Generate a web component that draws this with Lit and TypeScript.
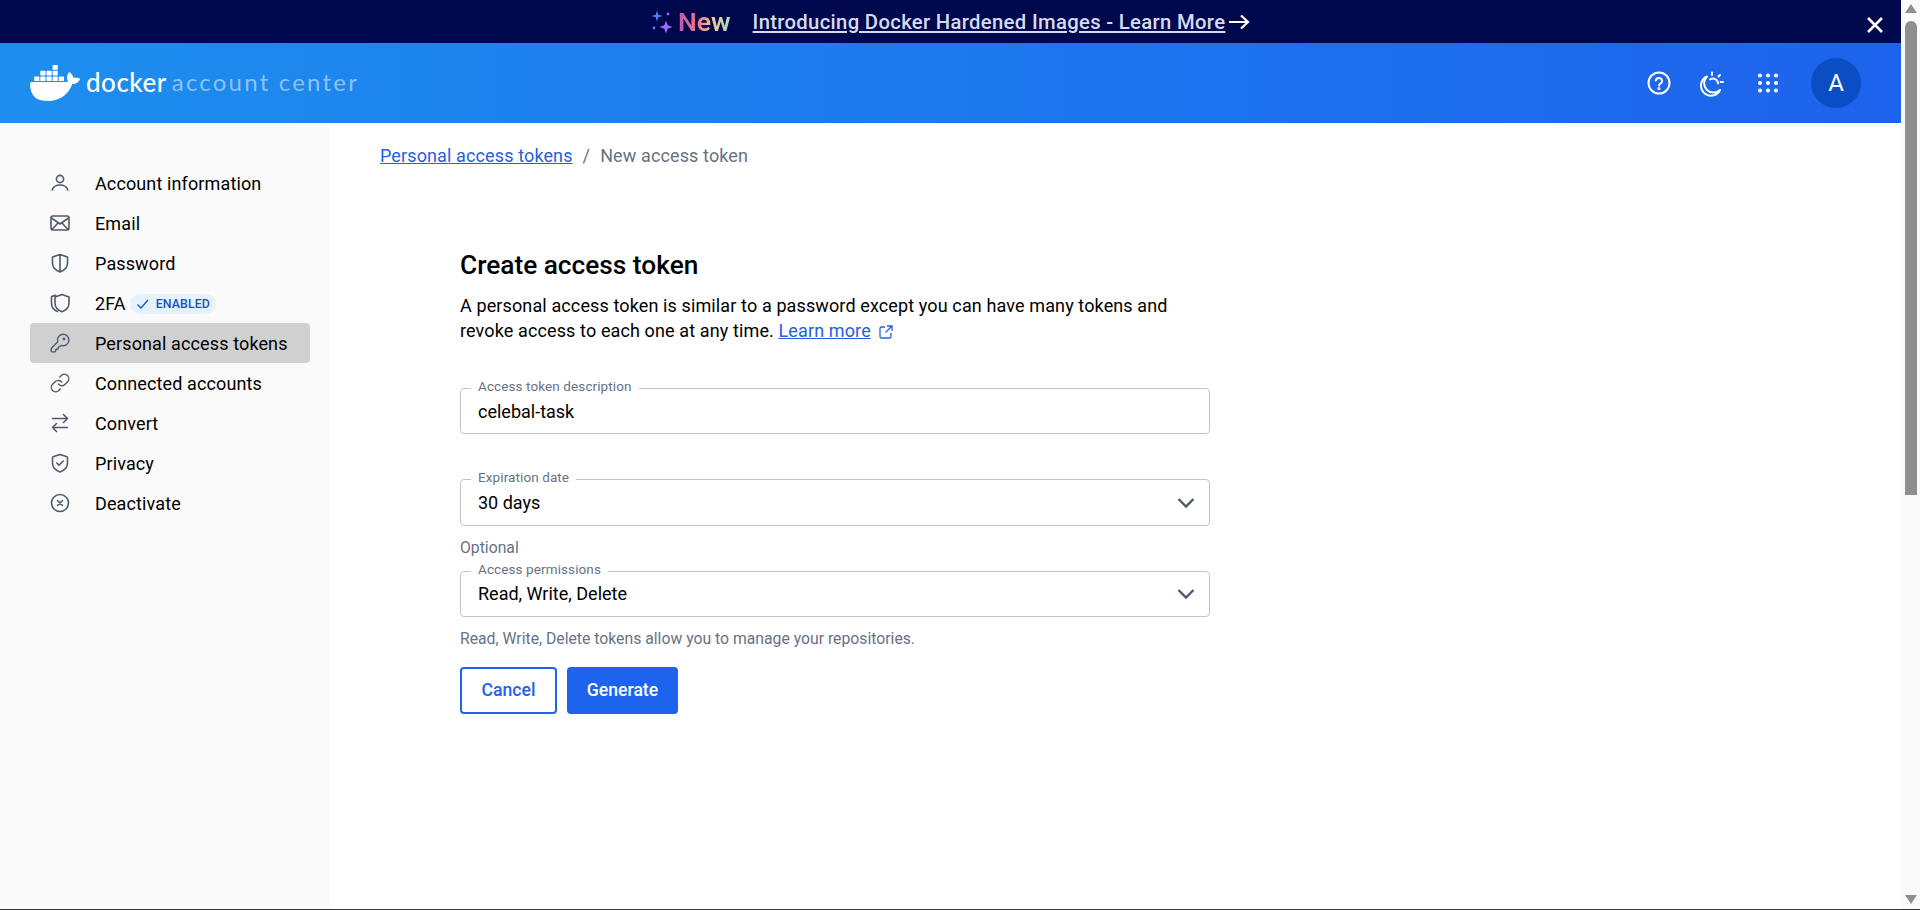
import { LitElement, html, css, svg } from "lit";
import { customElement } from "lit/decorators.js";

const WHALE = "M13.983 11.078h2.119a.186.186 0 00.186-.185V9.006a.186.186 0 00-.186-.186h-2.119a.185.185 0 00-.185.185v1.888c0 .102.083.185.185.185m-2.954-5.43h2.118a.186.186 0 00.186-.186V3.574a.186.186 0 00-.186-.185h-2.118a.185.185 0 00-.185.185v1.888c0 .102.082.185.185.186m0 2.716h2.118a.187.187 0 00.186-.186V6.29a.186.186 0 00-.186-.185h-2.118a.185.185 0 00-.185.185v1.887c0 .102.082.185.185.186m-2.93 0h2.12a.186.186 0 00.184-.186V6.29a.185.185 0 00-.185-.185H8.1a.185.185 0 00-.185.185v1.887c0 .102.083.185.185.186m-2.964 0h2.119a.186.186 0 00.185-.186V6.29a.185.185 0 00-.185-.185H5.136a.186.186 0 00-.186.185v1.887c0 .102.084.185.186.186m5.893 2.715h2.118a.186.186 0 00.186-.185V9.006a.186.186 0 00-.186-.186h-2.118a.185.185 0 00-.185.185v1.888c0 .102.082.185.185.185m-2.93 0h2.12a.185.185 0 00.184-.185V9.006a.185.185 0 00-.184-.186h-2.12a.185.185 0 00-.184.185v1.888c0 .102.083.185.185.185m-2.964 0h2.119a.185.185 0 00.185-.185V9.006a.185.185 0 00-.184-.186h-2.12a.186.186 0 00-.186.186v1.887c0 .102.084.185.186.185m-2.92 0h2.12a.185.185 0 00.184-.185V9.006a.185.185 0 00-.184-.186h-2.12a.185.185 0 00-.185.185v1.888c0 .102.083.185.185.185M23.763 9.89c-.065-.051-.672-.51-1.954-.51-.338.001-.676.03-1.01.087-.248-1.7-1.653-2.53-1.716-2.566l-.344-.199-.226.327c-.284.438-.49.922-.612 1.43-.23.97-.09 1.882.403 2.661-.595.332-1.55.413-1.744.42H.751a.751.751 0 00-.75.748 11.376 11.376 0 00.692 4.062c.545 1.428 1.355 2.48 2.41 3.124 1.18.723 3.1 1.137 5.275 1.137.983.003 1.963-.086 2.93-.266a12.248 12.248 0 003.823-1.389c.98-.567 1.86-1.288 2.61-2.136 1.252-1.418 1.998-2.997 2.553-4.4h.221c1.372 0 2.215-.549 2.68-1.009.309-.293.55-.65.707-1.046l.098-.288Z";

const icon = (body: unknown) => html`<svg class="ic" viewBox="0 0 24 24" fill="none" stroke="currentColor" stroke-width="1.6" stroke-linecap="round" stroke-linejoin="round">${body}</svg>`;

const NAV = [
  { label: "Account information", icon: svg`<circle cx="12" cy="8" r="3.6"/><path d="M4.2 19c1-3 4-5 7.8-5s6.8 2 7.8 5"/>` },
  { label: "Email", icon: svg`<rect x="3" y="5" width="18" height="14" rx="2"/><path d="M3.5 7l8.500 6 8.500-6M4 18.500l6-6.500M20 18.500l-6-6.500"/>` },
  { label: "Password", icon: svg`<path d="M12 3.500l7.500 2.500v6c0 4.500-3.300 7.400-7.500 9-4.200-1.600-7.500-4.500-7.500-9V6zM12 3.500V21"/>` },
  { label: "2FA", chip: true, icon: svg`<path d="M14 3.500l7 2.500v6c0 4.500-3 7.200-7 8.700-4-1.500-7-4.200-7-8.700V6zM7.500 4.200L3.500 5.500v6.500c0 4 2.500 7 6 8.500"/>` },
  { label: "Personal access tokens", active: true, icon: svg`<path transform="translate(1.500 1.500) scale(.88)" d="M2.586 17.414A2 2 0 0 0 2 18.828V21a1 1 0 0 0 1 1h3a1 1 0 0 0 1-1v-1a1 1 0 0 1 1-1h1a1 1 0 0 0 1-1v-1a1 1 0 0 1 1-1h.172a2 2 0 0 0 1.414-.586l.814-.814a6.500 6.500 0 1 0-4-4z"/><circle cx="16" cy="8" r=".6"/>` },
  { label: "Connected accounts", icon: svg`<path transform="translate(1.500 1.500) scale(.88)" d="M10 13a5 5 0 0 0 7.540.540l3-3a5 5 0 0 0-7.070-7.070l-1.720 1.710M14 11a5 5 0 0 0-7.540-.540l-3 3a5 5 0 0 0 7.070 7.070l1.710-1.710"/>` },
  { label: "Convert", icon: svg`<path d="M4.500 7.500H19.500M15.500 3.500l4 4-4 4M19.500 16.500H4.500M8.500 12.500l-4 4 4 4"/>` },
  { label: "Privacy", icon: svg`<path d="M12 3.500l6.300 2a1.500 1.500 0 0 1 1.200 1.500v5c0 4.500-3.300 7.400-7.500 9-4.200-1.600-7.500-4.500-7.500-9V7a1.500 1.500 0 0 1 1.200-1.500zM8.800 12l2.200 2.200 4.200-4.200"/>` },
  { label: "Deactivate", icon: svg`<circle cx="12" cy="12" r="8.500"/><path d="M9.500 9.500l5 5M14.500 9.500l-5 5"/>` },
];

const chevron = html`<svg class="chev" viewBox="0 0 18 12" fill="none" stroke="currentColor" stroke-width="2.400"><path d="M1.500 2l7.500 7.500L16.500 2"/></svg>`;

@customElement("app-root")
export class AppRoot extends LitElement {
  static styles = css`
    :host { display: block; height: 100vh; overflow: hidden; font-family: Roboto, "Noto Sans", sans-serif; color: #000; background: #fff; }
    * { box-sizing: border-box; }
    .page { display: flex; height: 910px; border-bottom: 1px solid #333; }
    .content { flex: 1; min-width: 0; display: flex; flex-direction: column; }
    .scroll { width: 19px; background: #fafafa; display: flex; flex-direction: column; align-items: center; padding: 4px 0 5px 1px; }
    .tri { width: 0; height: 0; border-left: 6px solid transparent; border-right: 6px solid transparent; }
    .tri.up { border-bottom: 9px solid #8f8f8f; }
    .tri.down { border-top: 9px solid #8f8f8f; margin-top: auto; }
    .thumb { width: 12px; height: 474px; margin-top: 8px; background: #8f8f8f; border-radius: 6px 6px 0 0; }

    .banner { height: 43px; background: #00084d; display: flex; align-items: center; padding: 0 17px 0 650px; color: #fff; }
    .spark { width: 24px; height: 24px; margin-right: 4px; }
    .new { font-size: 26.5px; line-height: 32px; font-weight: 600; background: linear-gradient(90deg, #b85aa8 0%, #f0708a 35%, #f6c79a 65%, #a8dcc0 100%); -webkit-background-clip: text; background-clip: text; color: transparent; margin-right: 22px; }
    .promo { font-size: 20.25px; font-weight: 500; color: #d6dbee; text-decoration: underline; letter-spacing: .33px; }
    .arrow { width: 22px; height: 16px; margin-left: 3px; }
    .close { margin: 7px 0 0 auto; width: 18px; height: 18px; }

    .header { height: 80px; background: linear-gradient(90deg, #1d8eee 0%, #1d63ed 100%); display: flex; align-items: center; padding: 0 40px 0 30px; color: #fff; }
    .whale { width: 50px; height: 50px; fill: #fff; margin-right: 6px; }
    .brand { font-family: Lato, sans-serif; font-size: 26px; line-height: 30px; font-weight: 500; letter-spacing: .5px; margin-bottom: 2px; }
    .sub { font-family: Lato, sans-serif; font-size: 24px; line-height: 30px; font-weight: 400; letter-spacing: 2.2px; color: #8cc2f8; margin: 0 0 2px 5px; }
    .tools { margin-left: auto; display: flex; align-items: center; }
    .tool { width: 28px; height: 28px; display: block; }
    .t1 { margin-right: 23px; }
    .t2 { margin-right: 30px; }
    .t3 { margin-right: 29px; }
    .avatar { width: 50px; height: 50px; border-radius: 50%; background: #0b4dc4; display: flex; align-items: center; justify-content: center; font-size: 24px; color: #fff; }

    .body { flex: 1; display: flex; min-height: 0; }
    .side { width: 330px; background: #fafafa; padding: 40px 20px 0 30px; }
    .item { height: 40px; display: flex; align-items: center; padding-left: 18px; border-radius: 4px; font-size: 18px; letter-spacing: .12px; }
    .item.active { background: #d0d0d0; }
    .ic { width: 24px; height: 24px; color: #505a6d; flex: none; margin-right: 23px; }
    .chip { display: flex; align-items: center; height: 20px; margin: 1px 0 0 4px; padding: 0 6px 0 5px; border-radius: 10px; background: #e5f2fc; color: #1c50c0; font-size: 12.375px; font-weight: 500; letter-spacing: .1px; }
    .chip svg { width: 16px; height: 16px; margin-right: 5px; }

    .main { flex: 1; padding: 21px 0 0 50px; }
    .crumb { font-size: 18px; line-height: 24px; color: #677285; letter-spacing: .12px; }
    .crumb a { color: #2560e0; text-decoration: underline; }
    .sep { margin: 0 10px; }
    .form { margin: 81px 0 0 80px; width: 750px; }
    h1 { margin: 0; font-size: 26.25px; line-height: 32px; font-weight: 500; }
    .intro { margin: 12px 0 36px; font-size: 18px; line-height: 25px; letter-spacing: .12px; }
    .intro a { color: #2560e0; text-decoration: underline; }
    .ext { width: 16px; height: 16px; color: #2560e0; vertical-align: -3px; margin-left: 3px; }
    fieldset { margin: 0; padding: 0 17px 7px; border: 1px solid #c4c4c4; border-radius: 4px; height: 55px; display: flex; align-items: center; justify-content: space-between; }
    legend { padding: 0 7px 4px; margin-left: -7px; font-size: 13.5px; line-height: 14px; letter-spacing: .1px; color: #677285; }
    .val { font-size: 18px; line-height: 24px; }
    .chev { width: 18px; height: 12px; color: #505a6d; margin-right: -3px; }
    .f2 { margin-top: 36px; height: 56px; }
    .optional { margin-top: 12px; font-size: 15.75px; line-height: 20px; color: #677285; }
    .f3 { margin-top: 4px; padding-bottom: 9px; }
    .help { margin-top: 12px; font-size: 15.75px; line-height: 20px; color: #677285; }
    .btns { margin-top: 18px; display: flex; gap: 10px; }
    button { height: 47px; border-radius: 4px; font: 500 17.6px Roboto, sans-serif; padding: 0 0 2px; }
    .cancel { width: 97px; background: #fff; border: 2px solid #1d63ed; color: #1d63ed; }
    .gen { width: 111px; background: #1d63ed; border: none; color: #fff; }
  `;

  render() {
    return html`
      <div class="page">
        <div class="content">
          <div class="banner">
            <svg class="spark" viewBox="0 0 24 24"><path fill="#4f7fff" d="M7 0.500l1.300 4.200L12.500 6 8.300 7.300 7 11.500 5.700 7.300 1.500 6l4.200-1.300z"/><path fill="#9a6bff" d="M16 10.500l1.700 4.800 4.800 1.700-4.800 1.700L16 23.500l-1.700-4.800L9.500 17l4.800-1.700z"/><circle cx="18" cy="4" r="1.400" fill="#8a6fe8"/><circle cx="4" cy="18" r="1.400" fill="#4f7fff"/></svg>
            <span class="new">New</span>
            <span class="promo">Introducing Docker Hardened Images - Learn More</span>
            <svg class="arrow" viewBox="0 0 22 16" fill="none" stroke="#fff" stroke-width="2.200"><path d="M1 8h19M13 1.500L20 8l-7 6.500"/></svg>
            <svg class="close" viewBox="0 0 18 18" fill="none" stroke="#fff" stroke-width="2.600"><path d="M2 2l14 14M16 2L2 16"/></svg>
          </div>
          <div class="header">
            <svg class="whale" viewBox="0 0 24 24"><path d="${WHALE}"/></svg>
            <span class="brand">docker</span><span class="sub">account center</span>
            <div class="tools">
              <svg class="tool t1" viewBox="0 0 28 28" fill="none" stroke="#fff" stroke-width="2" stroke-linecap="round"><circle cx="14" cy="14" r="10.500"/><path d="M10.800 11.500a3.200 3.200 0 0 1 6.300.700c0 2.200-3 2.400-3 4.300"/><circle cx="14" cy="19.500" r=".6"/></svg>
              <svg class="tool t2" viewBox="0 0 28 28" fill="none" stroke="#fff" stroke-width="2" stroke-linecap="round" stroke-linejoin="round"><path d="M11 7.500A10 10 0 1 0 24 21 8.500 8.500 0 0 1 11 7.500z"/><path d="M14 10.500a5 5 0 0 1 8 4M16 3.500V6M24.500 13H27M22.500 7.500L24 6"/></svg>
              <svg class="tool t3" viewBox="0 0 28 28" fill="#fff"><circle cx="6" cy="6.500" r="2.100"/><circle cx="14" cy="6.500" r="2.100"/><circle cx="22" cy="6.500" r="2.100"/><circle cx="6" cy="14" r="2.100"/><circle cx="14" cy="14" r="2.100"/><circle cx="22" cy="14" r="2.100"/><circle cx="6" cy="21.500" r="2.100"/><circle cx="14" cy="21.500" r="2.100"/><circle cx="22" cy="21.500" r="2.100"/></svg>
              <div class="avatar">A</div>
            </div>
          </div>
          <div class="body">
            <nav class="side">
              ${NAV.map(n => html`<div class="item ${n.active ? "active" : ""}">
                ${icon(n.icon)}<span>${n.label}</span>
                ${n.chip ? html`<span class="chip"><svg viewBox="0 0 16 16" fill="none" stroke="currentColor" stroke-width="1.300"><path d="M2.500 8.500l3.500 3.500 7-8"/></svg>ENABLED</span>` : ""}
              </div>`)}
            </nav>
            <main class="main">
              <div class="crumb"><a>Personal access tokens</a><span class="sep">/</span>New access token</div>
              <div class="form">
                <h1>Create access token</h1>
                <p class="intro">A personal access token is similar to a password except you can have many tokens and revoke access to each one at any time. <a>Learn more</a> <svg class="ext" viewBox="0 0 16 16" fill="none" stroke="currentColor" stroke-width="1.300"><path d="M7 3H3.500A1.500 1.500 0 0 0 2 4.500v8A1.500 1.500 0 0 0 3.500 14h8a1.500 1.500 0 0 0 1.500-1.500V9M9 2h5v5M14 2L7.500 8.500"/></svg></p>
                <fieldset><legend>Access token description</legend><span class="val">celebal-task</span></fieldset>
                <fieldset class="f2"><legend>Expiration date</legend><span class="val">30 days</span>${chevron}</fieldset>
                <div class="optional">Optional</div>
                <fieldset class="f3"><legend>Access permissions</legend><span class="val">Read, Write, Delete</span>${chevron}</fieldset>
                <div class="help">Read, Write, Delete tokens allow you to manage your repositories.</div>
                <div class="btns"><button class="cancel">Cancel</button><button class="gen">Generate</button></div>
              </div>
            </main>
          </div>
        </div>
        <div class="scroll"><div class="tri up"></div><div class="thumb"></div><div class="tri down"></div></div>
      </div>
    `;
  }
}
